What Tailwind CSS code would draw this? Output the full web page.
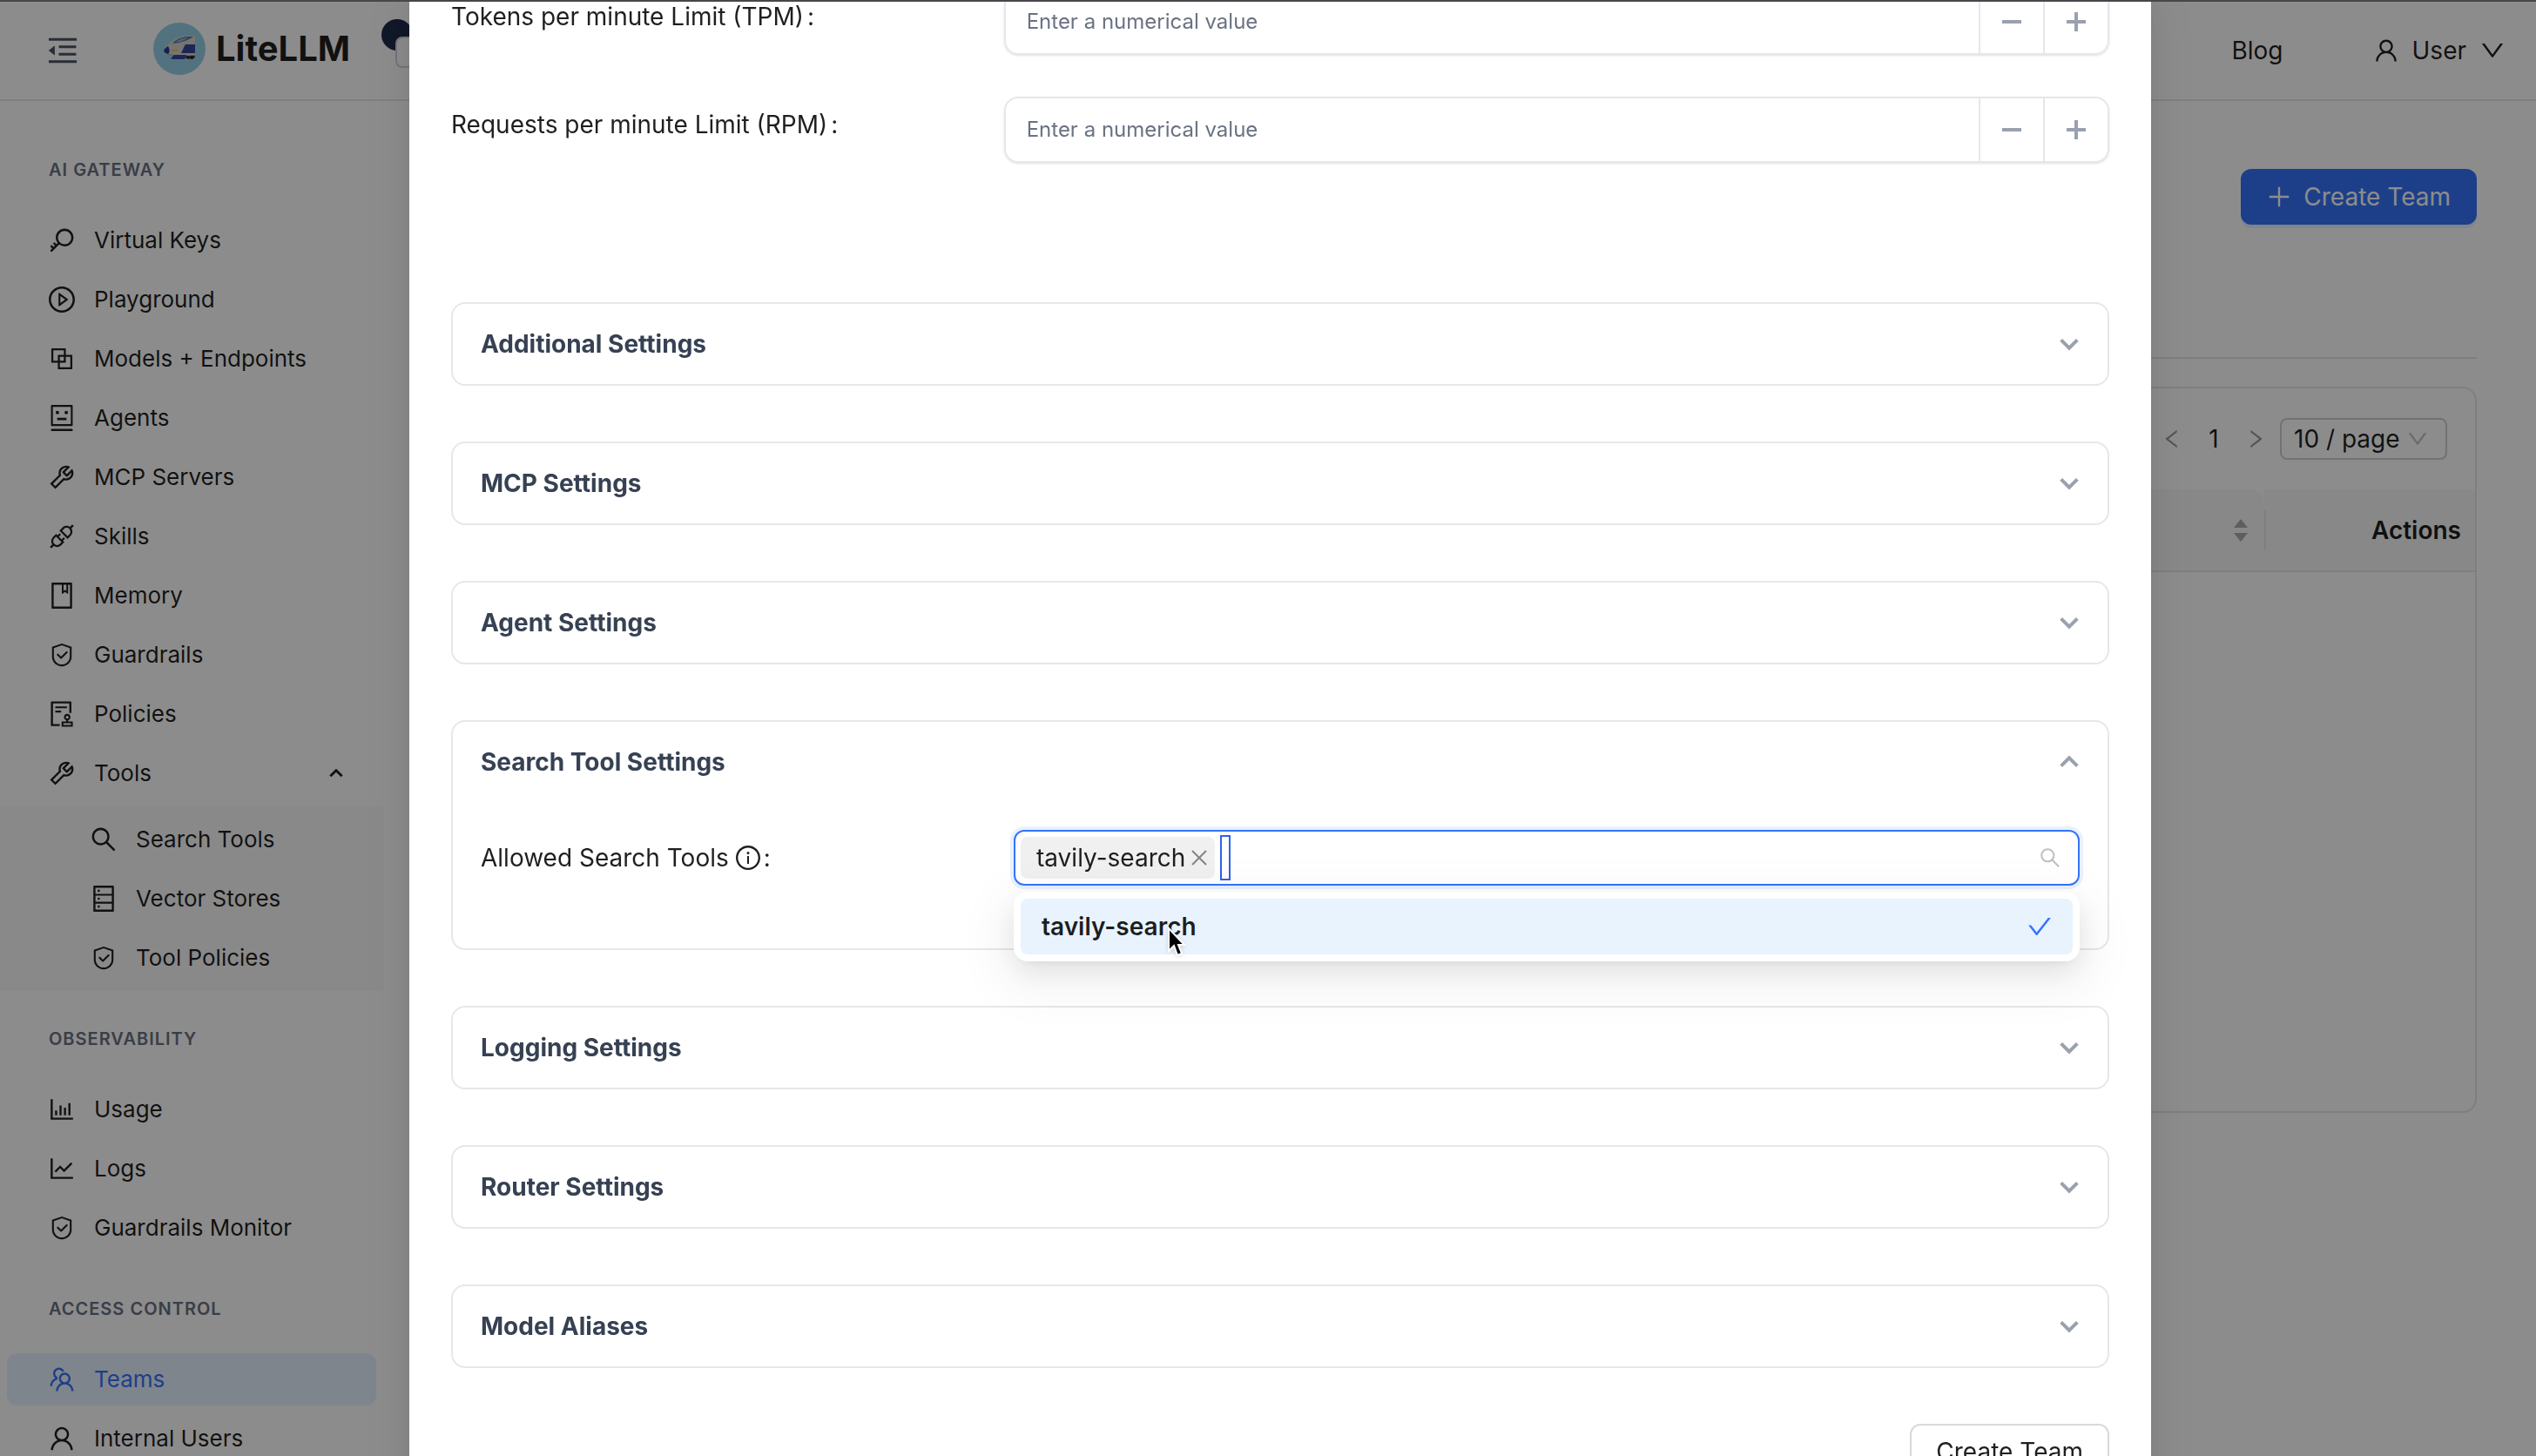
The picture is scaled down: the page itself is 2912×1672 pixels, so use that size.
<!DOCTYPE html>
<html lang="en">
<head>
    <meta charset="UTF-8">
    <meta name="viewport" content="width=device-width, initial-scale=1.0">
    <title>LiteLLM - Teams</title>
    <script src="https://cdn.jsdelivr.net/npm/@tailwindcss/browser@4"></script>
</head>
<body class="h-screen overflow-hidden bg-white font-['Inter',sans-serif] text-[28px] leading-[44px] text-black/88">

    <!-- Icon sprite -->
    <svg class="hidden" aria-hidden="true">
        <symbol id="i-fold" viewBox="64 64 896 896"><path d="M408 442h480c4.400 0 8-3.600 8-8v-56c0-4.400-3.600-8-8-8H408c-4.400 0-8 3.600-8 8v56c0 4.400 3.600 8 8 8zm-8 204c0 4.400 3.600 8 8 8h480c4.400 0 8-3.600 8-8v-56c0-4.400-3.600-8-8-8H408c-4.400 0-8 3.600-8 8v56zm504-486H120c-4.400 0-8 3.600-8 8v56c0 4.400 3.600 8 8 8h784c4.400 0 8-3.600 8-8v-56c0-4.400-3.600-8-8-8zm0 632H120c-4.400 0-8 3.600-8 8v56c0 4.400 3.600 8 8 8h784c4.400 0 8-3.600 8-8v-56c0-4.400-3.600-8-8-8zM115.400 518.900L271.700 642c5.800 4.600 14.400.5 14.400-6.900V388.900c0-7.400-8.500-11.500-14.400-6.900L115.400 505.100a8.740 8.740 0 000 13.800z"/></symbol>
        <symbol id="i-key" viewBox="64 64 896 896"><path d="M608 112c-167.900 0-304 136.100-304 304 0 70.300 23.900 135 63.900 186.500l-41.100 41.100-62.300-62.300a8.150 8.150 0 00-11.400 0l-39.800 39.800a8.150 8.150 0 000 11.400l62.300 62.300-44.900 44.900-62.300-62.300a8.150 8.150 0 00-11.400 0l-39.800 39.800a8.150 8.150 0 000 11.400l62.300 62.300-65.300 65.300a8.030 8.030 0 000 11.300l42.300 42.300c3.100 3.100 8.200 3.100 11.300 0l253.600-253.600A304.060 304.060 0 00608 720c167.900 0 304-136.100 304-304S775.900 112 608 112zm161.200 465.200C726.200 620.300 668.900 644 608 644c-60.900 0-118.200-23.700-161.200-66.800-43.100-43-66.800-100.300-66.800-161.200 0-60.900 23.700-118.200 66.800-161.200 43-43.100 100.300-66.800 161.200-66.800 60.900 0 118.200 23.700 161.200 66.800 43.100 43 66.800 100.300 66.800 161.200 0 60.900-23.700 118.200-66.800 161.200z"/></symbol>
        <symbol id="i-play" viewBox="64 64 896 896"><path d="M512 64C264.600 64 64 264.600 64 512s200.600 448 448 448 448-200.600 448-448S759.400 64 512 64zm0 820c-205.400 0-372-166.600-372-372s166.600-372 372-372 372 166.600 372 372-166.600 372-372 372z"/><path d="M719.400 499.100l-296.100-215A15.900 15.900 0 00398 297v430c0 13.100 14.800 20.500 25.300 12.900l296.100-215a15.900 15.900 0 000-25.800zm-257.600 134V390.900L628.500 512 461.800 633.100z"/></symbol>
        <symbol id="i-block" viewBox="64 64 896 896"><path d="M856 376H648V168c0-8.800-7.200-16-16-16H168c-8.800 0-16 7.200-16 16v464c0 8.800 7.200 16 16 16h208v208c0 8.800 7.200 16 16 16h464c8.800 0 16-7.200 16-16V392c0-8.800-7.200-16-16-16zm-480 16v188H220V220h360v156H392c-8.800 0-16 7.200-16 16zm204 52v136H444V444h136zm224 360H444V648h188c8.800 0 16-7.200 16-16V444h156v360z"/></symbol>
        <symbol id="i-robot" viewBox="64 64 896 896"><path d="M300 328a60 60 0 10120 0 60 60 0 10-120 0zM852 64H172c-17.700 0-32 14.300-32 32v660c0 17.700 14.300 32 32 32h680c17.700 0 32-14.300 32-32V96c0-17.700-14.300-32-32-32zm-32 660H204V128h616v596zM604 328a60 60 0 10120 0 60 60 0 10-120 0zm250.200 556H169.800c-16.500 0-29.800 14.300-29.800 32v36c0 4.400 3.300 8 7.400 8h729.100c4.100 0 7.400-3.600 7.400-8v-36c.1-17.700-13.200-32-29.700-32zM664 508H360c-4.400 0-8 3.600-8 8v60c0 4.400 3.600 8 8 8h304c4.400 0 8-3.600 8-8v-60c0-4.400-3.600-8-8-8z"/></symbol>
        <symbol id="i-tool" viewBox="64 64 896 896"><path d="M876.600 239.500c-.5-.9-1.200-1.800-2-2.500-5-5-13.100-5-18.100 0L684.200 409.300l-67.900-67.900L788.700 169c.8-.8 1.400-1.600 2-2.500 3.600-6.100 1.600-13.900-4.500-17.500-98.200-58-226.800-44.700-311.300 39.700-67 67-89.200 162-66.500 247.400l-293 293c-3 3-2.800 7.900.3 11l169.700 169.700c3.100 3.100 8.100 3.300 11 .3l292.900-292.900c85.500 22.800 180.500.7 247.600-66.400 84.400-84.500 97.700-213.100 39.700-311.300zM786 499.800c-58.100 58.100-145.300 69.300-214.600 33.600l-8.800 8.800-.1-.1-274 274.100-79.200-79.200 230.100-230.100s0 .1.1.1l52.800-52.800c-35.700-69.300-24.500-156.500 33.600-214.600a184.200 184.200 0 01144-53.500L537 318.900a32.050 32.050 0 000 45.300l124.500 124.500a32.050 32.050 0 0045.300 0l132.800-132.800c3.700 51.800-14.400 104.800-53.600 143.900z"/></symbol>
        <symbol id="i-api" viewBox="64 64 896 896"><path d="M917.700 148.800l-42.400-42.400c-1.600-1.600-3.600-2.300-5.700-2.300s-4.100.8-5.700 2.300l-76.100 76.100a199.270 199.270 0 00-112.100-34.300c-51.200 0-102.400 19.500-141.500 58.600L432.300 308.700a8.030 8.030 0 000 11.300L704 591.700c1.600 1.600 3.600 2.300 5.700 2.300 2 0 4.100-.8 5.700-2.300l101.900-101.900c68.900-69 77-175.700 24.300-253.500l76.100-76.100c3.100-3.200 3.100-8.300 0-11.400zM769.100 441.700l-59.400 59.400-186.800-186.800 59.400-59.400c24.900-24.900 58.100-38.700 93.400-38.700 35.300 0 68.400 13.700 93.400 38.700 24.900 24.900 38.700 58.100 38.700 93.400 0 35.300-13.800 68.400-38.700 93.400zm-190.200 105a8.030 8.030 0 00-11.300 0L501 613.300 410.700 523l66.700-66.700c3.100-3.100 3.100-8.200 0-11.300L441 408.600a8.030 8.030 0 00-11.300 0L363 475.300l-43-43a7.850 7.850 0 00-5.700-2.300c-2 0-4.100.8-5.700 2.300L206.800 534.200c-68.900 69-77 175.700-24.300 253.500l-76.100 76.100a8.030 8.030 0 000 11.300l42.400 42.400c1.600 1.600 3.600 2.300 5.700 2.300s4.100-.8 5.700-2.300l76.100-76.100c33.700 22.900 72.900 34.300 112.100 34.300 51.200 0 102.400-19.500 141.500-58.600l101.900-101.900c3.100-3.100 3.100-8.200 0-11.300l-43-43 66.700-66.700c3.100-3.100 3.100-8.200 0-11.300l-36.600-36.200zM441.700 769.100a131.320 131.320 0 01-93.400 38.700c-35.300 0-68.400-13.700-93.400-38.700a131.320 131.320 0 01-38.700-93.400c0-35.300 13.700-68.400 38.700-93.400l59.400-59.400 186.800 186.800-59.400 59.400z"/></symbol>
        <symbol id="i-book" viewBox="64 64 896 896"><path d="M832 64H192c-17.700 0-32 14.300-32 32v832c0 17.700 14.300 32 32 32h640c17.700 0 32-14.300 32-32V96c0-17.700-14.300-32-32-32zm-260 72h96v209.900L621.500 312 572 347.400V136zm220 752H232V136h280v296.900c0 3.300 1 6.600 3 9.300a15.900 15.900 0 0022.300 3.700l83.800-59.900 81.400 59.400c2.700 2 6 3.100 9.400 3.100 8.800 0 16-7.200 16-16V136h64v752z"/></symbol>
        <symbol id="i-safety" viewBox="0 0 1024 1024"><path d="M512 64L128 192v384c0 212.100 171.900 384 384 384s384-171.900 384-384V192L512 64zm312 512c0 172.300-139.700 312-312 312S200 748.300 200 576V246l312-110 312 110v330z"/><path d="M378.400 475.100a35.910 35.910 0 00-50.900 0 35.910 35.910 0 000 50.900l129.400 129.400 2.100 2.100a33.980 33.980 0 0048.100 0L730.600 434a33.980 33.980 0 000-48.100l-2.800-2.800a33.980 33.980 0 00-48.100 0L483 579.700 378.400 475.100z"/></symbol>
        <symbol id="i-audit" viewBox="64 64 896 896"><path d="M296 250c-4.400 0-8 3.600-8 8v48c0 4.400 3.600 8 8 8h384c4.400 0 8-3.600 8-8v-48c0-4.400-3.600-8-8-8H296zm184 144H296c-4.400 0-8 3.600-8 8v48c0 4.400 3.600 8 8 8h184c4.400 0 8-3.600 8-8v-48c0-4.400-3.600-8-8-8zm-48 458H208V148h560v320c0 4.400 3.600 8 8 8h56c4.400 0 8-3.600 8-8V108c0-17.700-14.300-32-32-32H168c-17.700 0-32 14.300-32 32v784c0 17.700 14.300 32 32 32h264c4.400 0 8-3.600 8-8v-56c0-4.400-3.600-8-8-8zm440-88H728v-36.600c46.300-13.800 80-56.600 80-107.400 0-61.900-50.100-112-112-112s-112 50.100-112 112c0 50.700 33.700 93.600 80 107.400V764H520c-8.800 0-16 7.200-16 16v152c0 8.800 7.200 16 16 16h352c8.800 0 16-7.200 16-16V780c0-8.800-7.200-16-16-16zM646 620c0-27.600 22.400-50 50-50s50 22.400 50 50-22.400 50-50 50-50-22.400-50-50zm180 266H566v-60h260v60z"/></symbol>
        <symbol id="i-search" viewBox="64 64 896 896"><path d="M909.600 854.500L649.900 594.800C690.200 542.700 712 479 712 412c0-80.200-31.300-155.400-87.900-212.100-56.600-56.700-132-87.900-212.100-87.900s-155.500 31.300-212.100 87.900C143.200 256.500 112 331.800 112 412c0 80.100 31.300 155.500 87.900 212.100C256.500 680.800 331.800 712 412 712c67 0 130.600-21.800 182.700-62l259.700 259.600a8.200 8.200 0 0011.600 0l43.600-43.500a8.200 8.200 0 000-11.600zM570.400 570.400C528 612.700 471.800 636 412 636s-116-23.300-158.400-65.600C211.300 528 188 471.800 188 412s23.300-116.100 65.600-158.400C296 211.300 352.200 188 412 188s116.100 23.200 158.400 65.600S636 352.200 636 412s-23.300 116.100-65.600 158.400z"/></symbol>
        <symbol id="i-database" viewBox="64 64 896 896"><path d="M832 64H192c-17.700 0-32 14.300-32 32v832c0 17.700 14.300 32 32 32h640c17.700 0 32-14.300 32-32V96c0-17.700-14.300-32-32-32zm-600 72h560v208H232V136zm560 480H232V408h560v208zm0 272H232V680h560v208zM304 240a40 40 0 1080 0 40 40 0 10-80 0zm0 272a40 40 0 1080 0 40 40 0 10-80 0zm0 272a40 40 0 1080 0 40 40 0 10-80 0z"/></symbol>
        <symbol id="i-bar" viewBox="64 64 896 896"><path d="M888 792H200V168c0-4.400-3.600-8-8-8h-56c-4.400 0-8 3.600-8 8v688c0 4.400 3.600 8 8 8h752c4.400 0 8-3.600 8-8v-56c0-4.400-3.600-8-8-8zm-600-80h56c4.400 0 8-3.600 8-8V560c0-4.400-3.600-8-8-8h-56c-4.400 0-8 3.600-8 8v144c0 4.400 3.600 8 8 8zm152 0h56c4.400 0 8-3.600 8-8V384c0-4.400-3.600-8-8-8h-56c-4.400 0-8 3.600-8 8v320c0 4.400 3.600 8 8 8zm152 0h56c4.400 0 8-3.600 8-8V462c0-4.400-3.600-8-8-8h-56c-4.400 0-8 3.600-8 8v242c0 4.400 3.600 8 8 8zm152 0h56c4.400 0 8-3.600 8-8V304c0-4.400-3.600-8-8-8h-56c-4.400 0-8 3.600-8 8v400c0 4.400 3.600 8 8 8z"/></symbol>
        <symbol id="i-line" viewBox="64 64 896 896"><path d="M888 792H200V168c0-4.400-3.600-8-8-8h-56c-4.400 0-8 3.600-8 8v688c0 4.400 3.600 8 8 8h752c4.400 0 8-3.600 8-8v-56c0-4.400-3.600-8-8-8zM305.800 637.700c3.100 3.100 8.100 3.100 11.300 0l138.300-137.600L583 628.500c3.100 3.100 8.200 3.100 11.300 0l275.400-275.300c3.100-3.100 3.100-8.200 0-11.300l-39.600-39.600a8.030 8.030 0 00-11.300 0l-230 229.900L461.400 404a8.030 8.030 0 00-11.300 0L266.300 586.700a8.030 8.030 0 000 11.300l39.500 39.700z"/></symbol>
        <symbol id="i-team" viewBox="64 64 896 896"><path d="M824.200 699.900a301.550 301.550 0 00-86.400-60.400C783.100 602.800 812 546.800 812 484c0-110.800-92.400-201.700-203.200-200-109.100 1.700-197 90.600-197 200 0 62.800 29 118.800 74.200 155.500a300.950 300.950 0 00-86.400 60.400C345 754.600 314 826.800 312 903.800a8 8 0 008 8.200h56c4.300 0 7.900-3.400 8-7.700 1.900-58 25.400-112.300 66.700-153.500A226.620 226.620 0 01612 684c60.900 0 118.200 23.700 161.300 66.800C814.600 792 838 846.300 840 904.300c.1 4.300 3.700 7.700 8 7.700h56a8 8 0 008-8.200c-2-77-33-149.200-87.800-203.900zM612 612c-34.200 0-66.400-13.300-90.500-37.500a126.860 126.860 0 01-37.500-91.800c.3-32.800 13.400-64.500 36.300-88 24-24.600 56.100-38.300 90.400-38.700 33.900-.3 66.800 12.900 91 36.600 24.800 24.300 38.400 56.800 38.400 91.400 0 34.200-13.300 66.300-37.500 90.500A127.300 127.300 0 01612 612zM361.500 510.400c-.9-8.700-1.400-17.500-1.400-26.400 0-15.900 1.500-31.400 4.300-46.500.7-3.600-1.200-7.300-4.500-8.800-13.600-6.100-26.100-14.500-36.900-25.100a127.540 127.540 0 01-38.700-95.400c.9-32.100 13.800-62.600 36.300-85.600 24.700-25.300 57.900-39.100 93.200-38.700 31.900.3 62.700 12.600 86 34.400 7.900 7.400 14.700 15.600 20.400 24.400 2 3.100 5.900 4.400 9.300 3.200 17.600-6.100 36.200-10.400 55.300-12.400 5.600-.6 8.800-6.600 6.300-11.600-32.500-64.300-98.900-108.700-175.700-109.900-110.900-1.700-203.300 89.200-203.300 199.900 0 62.800 28.900 118.800 74.200 155.500-31.800 14.700-61.100 35-86.500 60.400-54.800 54.700-85.800 126.900-87.800 204a8 8 0 008 8.200h56.100c4.300 0 7.900-3.400 8-7.700 1.900-58 25.400-112.300 66.700-153.500 29.400-29.400 65.400-49.800 104.700-59.700 3.900-1 6.500-4.700 6-8.700z"/></symbol>
        <symbol id="i-user" viewBox="64 64 896 896"><path d="M858.500 763.600a374 374 0 00-80.600-119.500 375.630 375.630 0 00-119.500-80.600c-.4-.2-.8-.3-1.200-.5C719.500 518 760 444.700 760 362c0-137-111-248-248-248S264 225 264 362c0 82.700 40.500 156 102.800 201.100-.4.2-.8.3-1.200.5-44.800 18.900-85 46-119.500 80.600a375.630 375.630 0 00-80.600 119.500A371.700 371.700 0 00136 901.800a8 8 0 008 8.200h60c4.400 0 7.900-3.500 8-7.800 2-77.200 33-149.500 87.800-204.300 56.700-56.700 132-87.900 212.200-87.900s155.500 31.200 212.200 87.900C779 752.700 810 825 812 902.200c.1 4.400 3.600 7.800 8 7.800h60a8 8 0 008-8.200c-1-47.800-10.900-94.300-29.500-138.200zM512 534c-45.900 0-89.100-17.900-121.600-50.400S340 407.900 340 362c0-45.900 17.900-89.100 50.400-121.600S466.100 190 512 190s89.100 17.900 121.600 50.400S684 316.100 684 362c0 45.900-17.900 89.100-50.400 121.600S557.900 534 512 534z"/></symbol>
        <symbol id="i-down" viewBox="64 64 896 896"><path d="M884 256h-75c-5.100 0-9.900 2.500-12.900 6.600L512 654.200 227.900 262.600c-3-4.100-7.800-6.600-12.900-6.600h-75c-6.500 0-10.300 7.400-6.500 12.700l352.600 486.100c12.800 17.600 39 17.600 51.700 0l352.600-486.100c3.900-5.300.1-12.700-6.400-12.700z"/></symbol>
        <symbol id="i-left" viewBox="64 64 896 896"><path d="M724 218.300V141c0-6.700-7.700-10.400-12.900-6.300L260.300 486.800a31.860 31.860 0 000 50.300l450.800 352.100c5.300 4.100 12.900.4 12.900-6.300v-77.300c0-4.900-2.300-9.600-6.100-12.600l-360-281 360-281.100c3.800-3 6.100-7.700 6.100-12.600z"/></symbol>
        <symbol id="i-right" viewBox="64 64 896 896"><path d="M765.700 486.800L314.900 134.700A7.970 7.970 0 00302 141v77.300c0 4.900 2.300 9.600 6.100 12.600l360 281.100-360 281.100c-3.900 3-6.100 7.700-6.100 12.600V883c0 6.700 7.700 10.400 12.900 6.300l450.800-352.100a31.960 31.960 0 000-50.400z"/></symbol>
        <symbol id="i-check" viewBox="64 64 896 896"><path d="M912 190h-69.900c-9.800 0-19.100 4.500-25.100 12.200L404.700 724.500 207 474a32 32 0 00-25.100-12.200H112c-6.700 0-10.400 7.700-6.300 12.900l273.900 347c12.800 16.200 37.400 16.200 50.300 0l488.400-618.900c4.100-5.100.4-12.800-6.300-12.800z"/></symbol>
        <symbol id="i-plus" viewBox="64 64 896 896"><path d="M482 152h60q8 0 8 8v704q0 8-8 8h-60q-8 0-8-8V160q0-8 8-8z"/><path d="M160 474h704q8 0 8 8v60q0 8-8 8H160q-8 0-8-8v-60q0-8 8-8z"/></symbol>
        <symbol id="i-info" viewBox="64 64 896 896"><path d="M512 64C264.600 64 64 264.600 64 512s200.600 448 448 448 448-200.600 448-448S759.400 64 512 64zm0 820c-205.400 0-372-166.600-372-372s166.600-372 372-372 372 166.600 372 372-166.600 372-372 372z"/><path d="M464 336a48 48 0 1096 0 48 48 0 10-96 0zm72 112h-48c-4.400 0-8 3.600-8 8v272c0 4.400 3.600 8 8 8h48c4.400 0 8-3.600 8-8V456c0-4.400-3.600-8-8-8z"/></symbol>
        <symbol id="i-chevron" viewBox="0 0 24 24"><path d="M4 8l8 8 8-8" fill="none" stroke="currentColor" stroke-width="3.400"/></symbol>
    </svg>

    <!-- Header -->
    <header class="flex h-[116px] items-center border-b-2 border-gray-200 pt-[2px] pr-9 pl-[54px]">
        <button type="button" aria-label="Collapse sidebar" class="text-gray-600"><svg class="size-9" fill="currentColor"><use href="#i-fold"/></svg></button>
        <a href="#" class="ml-[86px] flex items-center gap-3 pb-1">
            <svg class="size-[60px]" viewBox="0 0 60 60">
                <circle cx="30" cy="30" r="30" fill="#98d0e8"/>
                <path d="M12 32c3-6 9-12 17-15 6-2 12-2 19-2v23H24c-6-1-11-3-12-6z" fill="#d9d6cc"/>
                <path d="M14 35c9 3 20 3 34 2v1H24c-4 0-8-1-10-3z" fill="#a5a29c"/>
                <path d="M22 24c4-5 10-7 16-8h8c-5 4-14 7-24 8z" fill="#557fa3"/>
                <path d="M26 22c4-3 9-4 14-5-4 3-9 5-14 5z" fill="#9dbfd6"/>
                <path d="M37 25h11v10H32c2-4 3-7 5-10z" fill="#34479f"/>
                <path d="M12 32c1-2 3-4 5-5 2 3 2 7 0 9-3-1-5-2-5-4z" fill="#2a3990"/>
                <path d="M24 37h14l-2 5H22l-2-1z" fill="#34479f"/>
                <path d="M37 38h11v2c-3 2-7 2-11 1z" fill="#4b4a52"/>
                <circle cx="40" cy="40" r="1.500" fill="#222"/>
                <circle cx="44.500" cy="40" r="2" fill="#222"/>
                <path d="M21 32h7" stroke="#e2b45a"/>
            </svg>
            <span class="text-[40px] font-bold">LiteLLM</span>
        </a>
        <div class="relative ml-9 flex">
            <span class="-mt-9 size-9 rounded-full bg-[#1f2b4d]"></span>
            <span class="absolute top-[-16px] left-4 h-9 w-20 rounded-lg border-2 border-gray-300 bg-white"></span>
        </div>
        <nav class="ml-auto flex items-center gap-26">
            <a href="#">Blog</a>
            <button type="button" class="flex items-center gap-4"><svg class="size-7" fill="currentColor"><use href="#i-user"/></svg>User<svg class="size-7" fill="currentColor"><use href="#i-down"/></svg></button>
        </nav>
    </header>

    <div class="flex">
        <!-- Sidebar -->
        <aside class="w-[440px] shrink-0 pt-6 text-[26px]">
            <h2 class="px-14 pt-[42px] pb-[38px] text-[20px] leading-[26px] font-semibold tracking-wider text-gray-500">AI GATEWAY</h2>
            <ul class="flex flex-col gap-2 px-2 pb-2">
                <li><a href="#" class="flex h-15 items-center gap-[22px] rounded-xl px-12"><svg class="size-[30px]" fill="currentColor"><use href="#i-key"/></svg>Virtual Keys</a></li>
                <li><a href="#" class="flex h-15 items-center gap-[22px] rounded-xl px-12"><svg class="size-[30px]" fill="currentColor"><use href="#i-play"/></svg>Playground</a></li>
                <li><a href="#" class="flex h-15 items-center gap-[22px] rounded-xl px-12"><svg class="size-[30px]" fill="currentColor"><use href="#i-block"/></svg>Models + Endpoints</a></li>
                <li><a href="#" class="flex h-15 items-center gap-[22px] rounded-xl px-12"><svg class="size-[30px]" fill="currentColor"><use href="#i-robot"/></svg>Agents</a></li>
                <li><a href="#" class="flex h-15 items-center gap-[22px] rounded-xl px-12"><svg class="size-[30px]" fill="currentColor"><use href="#i-tool"/></svg>MCP Servers</a></li>
                <li><a href="#" class="flex h-15 items-center gap-[22px] rounded-xl px-12"><svg class="size-[30px]" fill="currentColor"><use href="#i-api"/></svg>Skills</a></li>
                <li><a href="#" class="flex h-15 items-center gap-[22px] rounded-xl px-12"><svg class="size-[30px]" fill="currentColor"><use href="#i-book"/></svg>Memory</a></li>
                <li><a href="#" class="flex h-15 items-center gap-[22px] rounded-xl px-12"><svg class="size-[30px]" fill="currentColor"><use href="#i-safety"/></svg>Guardrails</a></li>
                <li><a href="#" class="flex h-15 items-center gap-[22px] rounded-xl px-12"><svg class="size-[30px]" fill="currentColor"><use href="#i-audit"/></svg>Policies</a></li>
                <li><button type="button" aria-expanded="true" class="flex h-15 w-full items-center gap-[22px] rounded-xl pr-9 pl-12"><svg class="size-[30px]" fill="currentColor"><use href="#i-tool"/></svg>Tools<svg class="ml-auto size-5 rotate-180"><use href="#i-chevron"/></svg></button></li>
            </ul>
            <ul class="flex flex-col gap-2 bg-black/2 px-2 py-2">
                <li><a href="#" class="flex h-15 items-center gap-[22px] rounded-xl px-24"><svg class="size-[30px]" fill="currentColor"><use href="#i-search"/></svg>Search Tools</a></li>
                <li><a href="#" class="flex h-15 items-center gap-[22px] rounded-xl px-24"><svg class="size-[30px]" fill="currentColor"><use href="#i-database"/></svg>Vector Stores</a></li>
                <li><a href="#" class="flex h-15 items-center gap-[22px] rounded-xl px-24"><svg class="size-[30px]" fill="currentColor"><use href="#i-safety"/></svg>Tool Policies</a></li>
            </ul>
            <h2 class="px-14 pt-[42px] pb-[38px] text-[20px] leading-[26px] font-semibold tracking-wider text-gray-500">OBSERVABILITY</h2>
            <ul class="flex flex-col gap-2 px-2 pb-2">
                <li><a href="#" class="flex h-15 items-center gap-[22px] rounded-xl px-12"><svg class="size-[30px]" fill="currentColor"><use href="#i-bar"/></svg>Usage</a></li>
                <li><a href="#" class="flex h-15 items-center gap-[22px] rounded-xl px-12"><svg class="size-[30px]" fill="currentColor"><use href="#i-line"/></svg>Logs</a></li>
                <li><a href="#" class="flex h-15 items-center gap-[22px] rounded-xl px-12"><svg class="size-[30px]" fill="currentColor"><use href="#i-safety"/></svg>Guardrails Monitor</a></li>
            </ul>
            <h2 class="px-14 pt-[42px] pb-[38px] text-[20px] leading-[26px] font-semibold tracking-wider text-gray-500">ACCESS CONTROL</h2>
            <ul class="flex flex-col gap-2 px-2 pb-2">
                <li><a href="#" aria-current="page" class="flex h-15 items-center gap-[22px] rounded-xl bg-[#e8f3ff] px-12 text-[#3673fb]"><svg class="size-[30px]" fill="currentColor"><use href="#i-team"/></svg>Teams</a></li>
                <li><a href="#" class="flex h-15 items-center gap-[22px] rounded-xl px-12"><svg class="size-[30px]" fill="currentColor"><use href="#i-user"/></svg>Internal Users</a></li>
            </ul>
        </aside>

        <!-- Teams page -->
        <main class="min-w-0 grow pt-[78px] pr-17 pl-12">
            <div class="flex justify-end">
                <button type="button" class="flex h-16 items-center gap-[14px] rounded-xl bg-[#3673fb] px-[30px] text-white shadow-[0_4px_0_rgba(5,145,255,0.1)]"><svg class="size-7" fill="currentColor"><use href="#i-plus"/></svg>Create Team</button>
            </div>
            <div class="h-[154px] border-b-2 border-gray-200"></div>
            <section class="mt-8 rounded-2xl border-2 border-gray-200">
                <div class="flex h-29 items-center justify-end pr-8">
                    <button type="button" aria-label="Previous page" class="flex w-12 justify-center text-black/40"><svg class="size-6" fill="currentColor"><use href="#i-left"/></svg></button>
                    <a href="#" class="w-12 text-center">1</a>
                    <button type="button" aria-label="Next page" class="flex w-12 justify-center text-black/40"><svg class="size-6" fill="currentColor"><use href="#i-right"/></svg></button>
                    <div class="relative ml-1 flex items-center">
                        <select aria-label="Page size" class="h-12 w-48 appearance-none rounded-lg border-2 border-[#d0d0d0] pl-[14px] leading-[42px]">
                            <option>10 / page</option>
                        </select>
                        <svg class="pointer-events-none absolute right-[22px] size-6 text-black/25" fill="currentColor"><use href="#i-down"/></svg>
                    </div>
                </div>
                <table class="w-full table-fixed">
                    <thead class="h-[94px]">
                        <tr class="border-b-2 border-gray-200 bg-[#f7f7f7]">
                            <th class="rounded-t-2xl">
                                <button type="button" aria-label="Sort" class="ml-auto flex pr-[18px] text-black/30">
                                    <svg class="h-[26px] w-[18px]" viewBox="0 0 18 26" fill="currentColor"><path d="M9 0l8 10H1zM9 26l8-10H1z"/></svg>
                                </button>
                            </th>
                            <th class="w-[242px]"><div class="flex h-[46px] items-center justify-end border-l-2 border-gray-200 pr-4 font-semibold">Actions</div></th>
                        </tr>
                    </thead>
                    <tbody>
                        <tr><td colspan="2" class="h-[620px]"></td></tr>
                    </tbody>
                </table>
            </section>
        </main>
    </div>

    <!-- Create team dialog -->
    <div class="fixed inset-0 flex items-start justify-center overflow-hidden bg-black/45 pl-7">
        <div role="dialog" aria-modal="true" aria-label="Create Team" class="-mt-[13px] w-full max-w-[2000px] bg-white px-12 pb-12 shadow-[0_12px_32px_0_rgba(0,0,0,0.08),0_6px_12px_-8px_rgba(0,0,0,0.12),0_18px_56px_16px_rgba(0,0,0,0.05)]">
            <form>
                <div class="mb-12 grid grid-cols-3">
                    <label for="tpm" class="flex gap-1 pt-[10px]">Tokens per minute Limit (TPM)<span>:</span></label>
                    <div class="col-span-2 flex h-19 overflow-hidden rounded-2xl border-2 border-gray-200 shadow-sm">
                        <input id="tpm" type="text" inputmode="numeric" placeholder="Enter a numerical value" class="min-w-0 grow px-6 text-[24px] outline-none placeholder:text-gray-500">
                        <button type="button" aria-label="Decrease" class="flex w-[74px] items-center justify-center border-l-2 border-gray-200 text-gray-400"><svg class="size-[22px]" viewBox="0 0 22 22" stroke="currentColor" stroke-width="4"><path d="M0 11h22"/></svg></button>
                        <button type="button" aria-label="Increase" class="flex w-[74px] items-center justify-center border-l-2 border-gray-200 text-gray-400"><svg class="size-[22px]" viewBox="0 0 22 22" stroke="currentColor" stroke-width="4"><path d="M0 11h22M11 0v22"/></svg></button>
                    </div>
                </div>
                <div class="mb-40 grid grid-cols-3">
                    <label for="rpm" class="flex gap-1 pt-[10px]">Requests per minute Limit (RPM)<span>:</span></label>
                    <div class="col-span-2 flex h-19 overflow-hidden rounded-2xl border-2 border-gray-200 shadow-sm">
                        <input id="rpm" type="text" inputmode="numeric" placeholder="Enter a numerical value" class="min-w-0 grow px-6 text-[24px] outline-none placeholder:text-gray-500">
                        <button type="button" aria-label="Decrease" class="flex w-[74px] items-center justify-center border-l-2 border-gray-200 text-gray-400"><svg class="size-[22px]" viewBox="0 0 22 22" stroke="currentColor" stroke-width="4"><path d="M0 11h22"/></svg></button>
                        <button type="button" aria-label="Increase" class="flex w-[74px] items-center justify-center border-l-2 border-gray-200 text-gray-400"><svg class="size-[22px]" viewBox="0 0 22 22" stroke="currentColor" stroke-width="4"><path d="M0 11h22M11 0v22"/></svg></button>
                    </div>
                </div>

                <div class="flex flex-col gap-16">
                    <section class="rounded-2xl border-2 border-gray-200">
                        <button type="button" class="flex h-23 w-full items-center justify-between pr-[30px] pl-8 font-bold text-gray-700">Additional Settings<svg class="size-7 text-gray-400"><use href="#i-chevron"/></svg></button>
                    </section>
                    <section class="rounded-2xl border-2 border-gray-200">
                        <button type="button" class="flex h-23 w-full items-center justify-between pr-[30px] pl-8 font-bold text-gray-700">MCP Settings<svg class="size-7 text-gray-400"><use href="#i-chevron"/></svg></button>
                    </section>
                    <section class="rounded-2xl border-2 border-gray-200">
                        <button type="button" class="flex h-23 w-full items-center justify-between pr-[30px] pl-8 font-bold text-gray-700">Agent Settings<svg class="size-7 text-gray-400"><use href="#i-chevron"/></svg></button>
                    </section>
                    <section class="rounded-2xl border-2 border-gray-200">
                        <button type="button" aria-expanded="true" class="flex h-23 w-full items-center justify-between pr-[30px] pl-8 font-bold text-gray-700">Search Tool Settings<svg class="size-7 rotate-180 text-gray-400"><use href="#i-chevron"/></svg></button>
                        <div class="grid grid-cols-3 px-8 pt-8 pb-18">
                            <label for="search-tools" class="flex items-center">Allowed Search Tools<svg class="mr-1 ml-2 size-7" fill="currentColor"><use href="#i-info"/></svg>:</label>
                            <div class="relative col-span-2">
                                <div class="flex h-16 items-center rounded-xl border-2 border-[#3673fb] pr-5 pl-[6px] ring-4 ring-[#e8f1fd]">
                                    <span class="flex h-12 items-center gap-[6px] rounded-lg bg-black/6 pr-2 pl-[18px]">tavily-search
                                        <button type="button" aria-label="Remove tavily-search" class="text-black/45"><svg class="size-5" viewBox="0 0 20 20" stroke="currentColor" stroke-width="2"><path d="M2 2l16 16M18 2L2 18"/></svg></button>
                                    </span>
                                    <input id="search-tools" type="text" role="combobox" aria-expanded="true" class="ml-[6px] h-[52px] w-3 outline-2 -outline-offset-2 outline-[#2f62e6]">
                                    <svg class="ml-auto size-6 text-black/25" fill="currentColor"><use href="#i-search"/></svg>
                                </div>
                                <!-- Dropdown -->
                                <ul role="listbox" class="absolute inset-x-0 top-full mt-[7px] rounded-2xl bg-white p-2 shadow-[0_12px_32px_0_rgba(0,0,0,0.08),0_6px_12px_-8px_rgba(0,0,0,0.12),0_18px_56px_16px_rgba(0,0,0,0.05)]">
                                    <li role="option" aria-selected="true" class="flex h-16 items-center justify-between rounded-lg bg-[#e8f3fe] px-6 font-semibold">tavily-search<svg class="size-7 text-[#3673fb]" fill="currentColor"><use href="#i-check"/></svg></li>
                                </ul>
                                <!-- Mouse pointer -->
                                <svg class="absolute top-[111px] left-[176px] h-9 w-6 drop-shadow-sm" viewBox="0 0 24 36"><path d="M2 2v26l6-6 4 11 5-2-4-10h7z" fill="#000" stroke="#fff" stroke-width="2"/></svg>
                            </div>
                        </div>
                    </section>
                    <section class="rounded-2xl border-2 border-gray-200">
                        <button type="button" class="flex h-23 w-full items-center justify-between pr-[30px] pl-8 font-bold text-gray-700">Logging Settings<svg class="size-7 text-gray-400"><use href="#i-chevron"/></svg></button>
                    </section>
                    <section class="rounded-2xl border-2 border-gray-200">
                        <button type="button" class="flex h-23 w-full items-center justify-between pr-[30px] pl-8 font-bold text-gray-700">Router Settings<svg class="size-7 text-gray-400"><use href="#i-chevron"/></svg></button>
                    </section>
                    <section class="rounded-2xl border-2 border-gray-200">
                        <button type="button" class="flex h-23 w-full items-center justify-between pr-[30px] pl-8 font-bold text-gray-700">Model Aliases<svg class="size-7 text-gray-400"><use href="#i-chevron"/></svg></button>
                    </section>
                </div>

                <div class="mt-16 flex justify-end">
                    <button type="submit" class="h-16 rounded-xl border-2 border-[#d9d9d9] px-7 shadow-[0_4px_0_rgba(0,0,0,0.02)]">Create Team</button>
                </div>
            </form>
        </div>
    </div>

    <!-- Window edge -->
    <div class="fixed inset-x-0 top-0 h-[2px] bg-[#48464c]"></div>
</body>
</html>
